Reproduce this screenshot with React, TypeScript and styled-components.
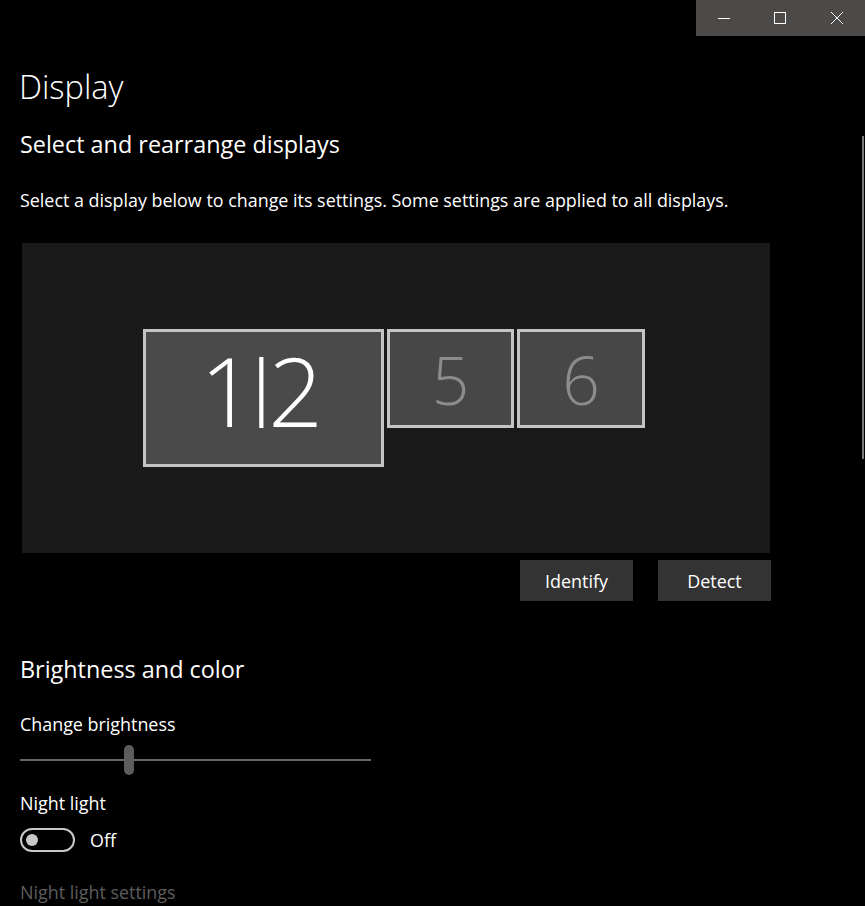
import styled, { createGlobalStyle } from 'styled-components';

const GlobalStyle = createGlobalStyle`
  html, body {
    margin: 0;
    padding: 0;
    background: #000;
  }
  body {
    font-family: 'Open Sans', 'Noto Sans', sans-serif;
    color: #fff;
  }
  * {
    box-sizing: border-box;
  }
`;

const Window = styled.div`
  position: relative;
  width: 865px;
  height: 906px;
  overflow: hidden;
  background: #000;
`;

const TitleBar = styled.div`
  display: flex;
  justify-content: flex-end;
  height: 36px;
`;

const CaptionGroup = styled.div`
  display: flex;
  width: 169px;
  background: #4c4a48;
`;

const CaptionButton = styled.button`
  flex: 1;
  height: 36px;
  display: flex;
  align-items: center;
  justify-content: center;
  padding: 0;
  border: 0;
  background: transparent;
  color: #fff;
`;

const Content = styled.main`
  padding: 0 20px;
`;

const PageTitle = styled.h1`
  margin: 31px 0 0 -1px;
  font-size: 32.6px;
  line-height: 40px;
  font-weight: 300;
`;

const SectionTitle = styled.h2<{ $gap: number }>`
  margin: ${({ $gap }) => $gap}px 0 0;
  font-size: 23.4px;
  line-height: 30px;
  font-weight: 400;
`;

const BodyText = styled.p<{ $gap: number; $muted?: boolean }>`
  margin: ${({ $gap }) => $gap}px 0 0;
  font-size: 17.9px;
  line-height: 24px;
  color: ${({ $muted }) => ($muted ? '#5d5d5d' : '#fff')};
`;

const Arrangement = styled.div`
  margin: 31px 0 0 2px;
  width: 748px;
  height: 310px;
  background: #191919;
  display: flex;
  align-items: center;
  justify-content: center;
`;

const MonitorRow = styled.div`
  display: flex;
  align-items: flex-start;
  gap: 3px;
  margin-left: -4px;
`;

const Monitor = styled.div<{ $w: number; $h: number; $primary?: boolean }>`
  width: ${({ $w }) => $w}px;
  height: ${({ $h }) => $h}px;
  border: 3px solid #c4c4c4;
  background: ${({ $primary }) => ($primary ? '#4a4a4a' : '#474747')};
  display: flex;
  align-items: center;
  justify-content: center;
  font-weight: 300;
  color: ${({ $primary }) => ($primary ? '#fff' : '#8c8c8c')};
`;

const MonitorNumber = styled.div`
  font-size: 66px;
  line-height: 1;
  white-space: nowrap;
`;

const MirroredNumber = styled.div`
  font-size: 96px;
  line-height: 96px;
  white-space: nowrap;
  letter-spacing: -0.2em;
  margin: 0 0.24em 16px 0;
`;

/* the pipe is squeezed to digit height (baseline to digit top) */
const MirrorBar = styled.span`
  display: inline-block;
  transform-origin: 50% 26.8px;
  transform: scaleY(0.726);
`;

const ButtonRow = styled.div`
  margin: 7px 0 0 2px;
  width: 749px;
  display: flex;
  justify-content: flex-end;
  gap: 25px;
`;

const ActionButton = styled.button`
  width: 113px;
  height: 41px;
  border: 0;
  padding: 0;
  background: #333;
  color: #fff;
  font-family: inherit;
  font-size: 17.9px;
`;

const Slider = styled.div`
  margin-top: 9px;
  position: relative;
  width: 351px;
  height: 30px;
  display: flex;
  align-items: center;
`;

const Track = styled.div`
  width: 100%;
  height: 2px;
  background: #676767;
`;

const Thumb = styled.div`
  position: absolute;
  top: 0;
  width: 10px;
  height: 30px;
  border-radius: 5px;
  background: #5c5c5c;
`;

const ToggleRow = styled.div`
  margin-top: 13px;
  display: flex;
  align-items: center;
  gap: 15px;
  height: 24px;
`;

const Toggle = styled.div`
  width: 55px;
  height: 24px;
  border: 2px solid #c8c8c8;
  border-radius: 12px;
  display: flex;
  align-items: center;
  padding-left: 4px;
`;

const Knob = styled.div`
  width: 12px;
  height: 12px;
  border-radius: 50%;
  background: #c8c8c8;
`;

const ToggleLabel = styled.span`
  font-size: 17.9px;
  line-height: 24px;
`;

const Scrollbar = styled.div`
  position: absolute;
  right: 1px;
  top: 136px;
  width: 2px;
  height: 323px;
  background: #7a7a7a;
`;

export default function App() {
  const brightness = 29.5;
  return (
    <>
      <GlobalStyle />
      <Window>
        <TitleBar>
          <CaptionGroup>
            <CaptionButton aria-label="Minimize">
              <svg width="12" height="12" viewBox="0 0 12 12">
                <path d="M0 6.5h12" stroke="#fff" strokeWidth="1" />
              </svg>
            </CaptionButton>
            <CaptionButton aria-label="Maximize">
              <svg width="12" height="12" viewBox="0 0 12 12">
                <rect x="0.5" y="0.5" width="11" height="11" fill="none" stroke="#fff" strokeWidth="1" />
              </svg>
            </CaptionButton>
            <CaptionButton aria-label="Close">
              <svg width="12" height="12" viewBox="0 0 12 12">
                <path d="M0 0L12 12M12 0L0 12" stroke="#fff" strokeWidth="1" />
              </svg>
            </CaptionButton>
          </CaptionGroup>
        </TitleBar>
        <Content>
          <PageTitle>Display</PageTitle>
          <SectionTitle $gap={22}>Select and rearrange displays</SectionTitle>
          <BodyText $gap={29}>
            Select a display below to change its settings. Some settings are applied to all displays.
          </BodyText>
          <Arrangement>
            <MonitorRow>
              <Monitor $w={241} $h={138} $primary>
                <MirroredNumber>
                  1<MirrorBar>|</MirrorBar>2
                </MirroredNumber>
              </Monitor>
              <Monitor $w={127} $h={99}>
                <MonitorNumber>5</MonitorNumber>
              </Monitor>
              <Monitor $w={128} $h={99}>
                <MonitorNumber>6</MonitorNumber>
              </Monitor>
            </MonitorRow>
          </Arrangement>
          <ButtonRow>
            <ActionButton>Identify</ActionButton>
            <ActionButton>Detect</ActionButton>
          </ButtonRow>
          <SectionTitle $gap={53}>Brightness and color</SectionTitle>
          <BodyText $gap={28}>Change brightness</BodyText>
          <Slider>
            <Track />
            <Thumb style={{ left: `${brightness}%` }} />
          </Slider>
          <BodyText $gap={16}>Night light</BodyText>
          <ToggleRow>
            <Toggle>
              <Knob />
            </Toggle>
            <ToggleLabel>Off</ToggleLabel>
          </ToggleRow>
          <BodyText $gap={28} $muted>
            Night light settings
          </BodyText>
        </Content>
        <Scrollbar />
      </Window>
    </>
  );
}
